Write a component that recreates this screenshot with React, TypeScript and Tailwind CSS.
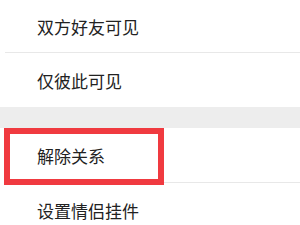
export default function App() {
  const font = { fontFamily: '"Noto Sans CJK SC", "Noto Sans", sans-serif' };
  return (
    <div className="w-[300px] h-[225px] overflow-hidden bg-white text-[#222222]" style={font}>
      <div className="flex flex-col">
        <div className="h-[52px] flex items-center pl-[37px] text-[17px] leading-none">双方好友可见</div>
        <div className="h-px bg-[#e8e8e8] ml-[5px]" />
        <div className="h-[54px] flex items-center pl-[37px] text-[17px] leading-none">仅彼此可见</div>
        <div className="h-[21px] bg-[#ededed]" />
        <div className="relative">
          <div className="h-[54px] flex items-center pl-[37px] text-[17px] leading-none">解除关系</div>
          <div className="h-px bg-[#e8e8e8] ml-[5px]" />
          <div className="absolute left-[4px] top-0 w-[160px] h-[57px] border-[6px] border-[#f03a40]" />
        </div>
        <div className="h-[54px] flex items-center pl-[37px] text-[17px] leading-none">设置情侣挂件</div>
      </div>
    </div>
  );
}
